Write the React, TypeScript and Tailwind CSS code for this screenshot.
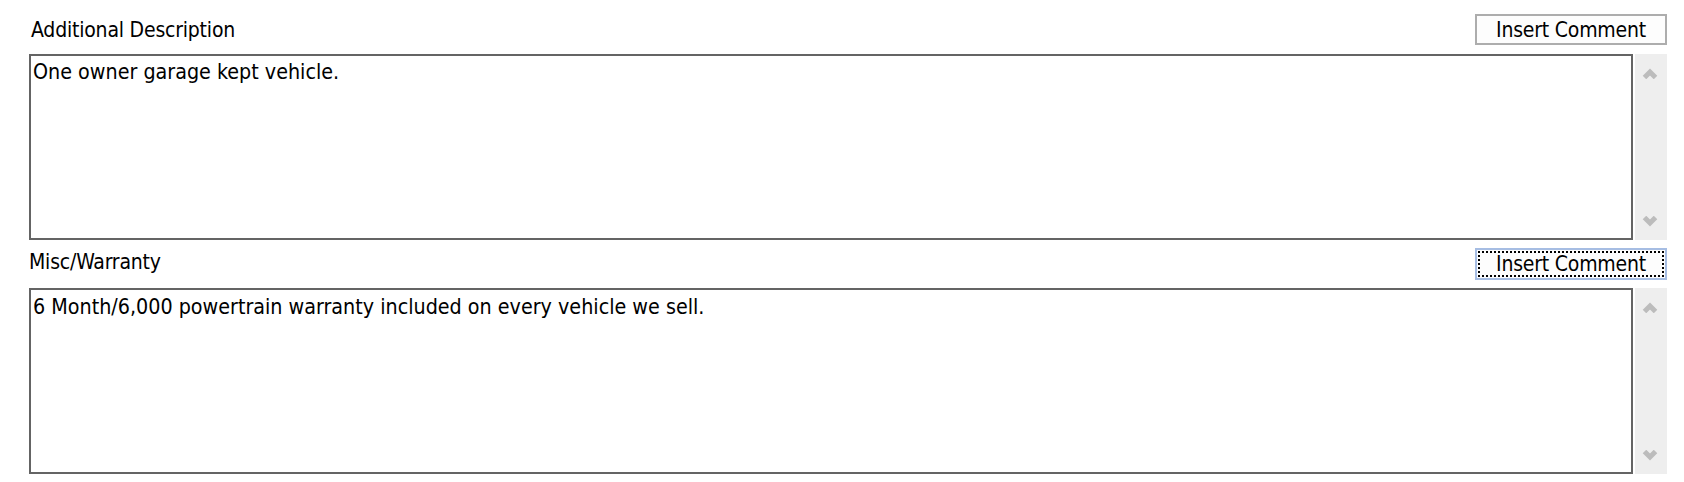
import React from "react";

const font = { fontFamily: '"DejaVu Sans Condensed", "DejaVu Sans", sans-serif' };

function Chevron({ down }: { down?: boolean }) {
  return (
    <svg width="16" height="13" viewBox="0 0 16 13" className="block">
      <polyline
        points={down ? "2.5,1.5 8,7 13.5,1.5" : "2.5,11.5 8,6 13.5,11.5"}
        fill="none"
        stroke="#bcbcbc"
        strokeWidth="5"
        strokeLinejoin="miter"
      />
    </svg>
  );
}

function Field({ text, pt }: { text: string; pt: string }) {
  return (
    <div className="flex h-[186px] gap-[2px]">
      <div
        className={`flex-1 border-2 border-[#646464] bg-white pl-[2px] ${pt} text-[21.3px] leading-[24px] tracking-normal text-black`}
      >
        {text}
      </div>
      <div className="flex w-[32px] flex-col items-center justify-between bg-[#eeeeee] pt-[12px] pb-[11px] pr-[2px]">
        <Chevron />
        <Chevron down />
      </div>
    </div>
  );
}

export default function App() {
  return (
    <div
      className="h-[482px] w-[1684px] bg-white pl-[29px] pr-[17px] tracking-[-0.2px] text-black"
      style={font}
    >
      <div className="flex h-[54px] items-start justify-between">
        <div className="ml-[2px] pt-[18px] text-[21px] leading-[24px]">Additional Description</div>
        <div className="mt-[14px] flex h-[31px] w-[192px] items-center justify-center border-2 border-[#adadad] bg-[#fdfdfd] text-[21px] leading-[24px]">
          Insert Comment
        </div>
      </div>
      <Field text="One owner garage kept vehicle." pt="pt-[4px]" />
      <div className="flex h-[48px] items-start justify-between">
        <div className="pt-[10px] text-[21px] leading-[24px]">Misc/Warranty</div>
        <div className="mt-[8px] flex h-[32px] w-[192px] border-2 border-[#a6bde3] bg-[#fdfdfd] p-[1px]">
          <div className="flex flex-1 items-center justify-center border-2 border-dotted border-black text-[21px] leading-[24px]">
            Insert Comment
          </div>
        </div>
      </div>
      <Field
        text="6 Month/6,000 powertrain warranty included on every vehicle we sell."
        pt="pt-[5px]"
      />
    </div>
  );
}
